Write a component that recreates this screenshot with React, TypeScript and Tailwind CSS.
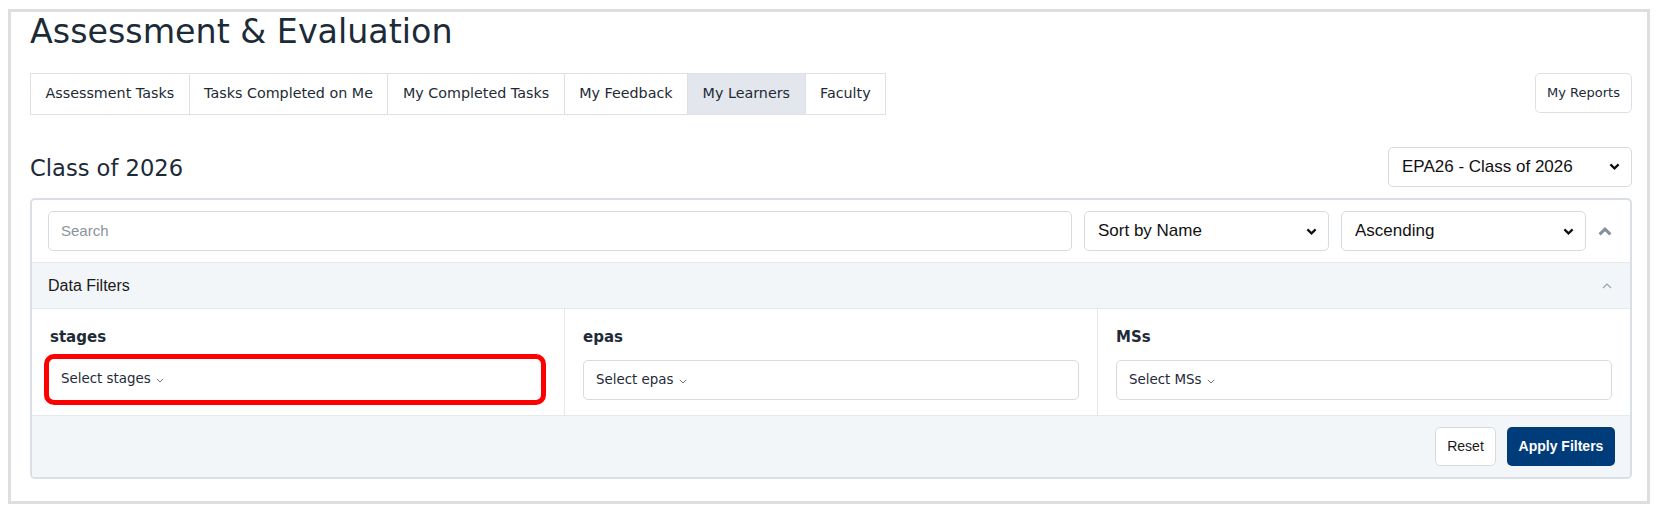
import React from 'react';

const verdana = { fontFamily: '"DejaVu Sans", Verdana, sans-serif' };
const arial = { fontFamily: '"Liberation Sans", Arial, sans-serif' };

const tabs = ['Assessment Tasks', 'Tasks Completed on Me', 'My Completed Tasks', 'My Feedback', 'My Learners', 'Faculty'];

function ChevronDown() {
  return (
    <svg width="11" height="7" viewBox="0 0 11 7" fill="none">
      <path d="M1.4 1.4 L5.5 5.4 L9.6 1.4" stroke="#111" strokeWidth="2.2" />
    </svg>
  );
}

function SmallCaret() {
  return (
    <svg width="8" height="5" viewBox="0 0 8 5" fill="none" className="ml-[5px] mt-[2px]">
      <path d="M0.8 0.8 L4 4 L7.2 0.8" stroke="#6b7580" strokeWidth="1" />
    </svg>
  );
}

function FakeSelect({ label, className }: { label: string; className: string }) {
  return (
    <div
      className={`flex h-[40px] items-center justify-between rounded-[5px] border border-[#d5dbe1] bg-white pl-[13px] pr-[11px] text-[17px] text-[#111] ${className}`}
      style={arial}
    >
      <span>{label}</span>
      <ChevronDown />
    </div>
  );
}

function FilterColumn({ label, placeholder, highlighted, first }: { label: string; placeholder: string; highlighted?: boolean; first?: boolean }) {
  return (
    <div className={`flex-1 px-[18px] pt-[17px] ${first ? '' : 'border-l border-[#e5e9ed]'}`}>
      <div className="h-[22px] text-[15px] font-bold leading-[22px] text-[#1e2b37]" style={verdana}>{label}</div>
      <div className="mt-[12px]">
        {highlighted ? (
          <div className="-mb-[5px] -ml-[6px] -mt-[6px] flex h-[51px] items-center rounded-[10px] border-[5px] border-[#ff0000] bg-white pl-[12px] text-[13.4px] text-[#1e2b37]" style={verdana}>
            Select stages<SmallCaret />
          </div>
        ) : (
          <div className="flex h-[40px] items-center rounded-[5px] border border-[#d5dbe1] bg-white pl-[12px] text-[13.4px] text-[#1e2b37]" style={verdana}>
            {placeholder}<SmallCaret />
          </div>
        )}
      </div>
    </div>
  );
}

export default function App() {
  return (
    <div className="min-h-[512px] bg-white pl-[8px] pt-[9px]">
      <div className="box-border h-[495px] w-[1642px] border-[3px] border-[#dedede] pl-[19px] pr-[15px]">
        <h1 className="h-[40px] text-[33.3px] font-normal leading-[40px] text-[#1c2b38]" style={verdana}>
          Assessment &amp; Evaluation
        </h1>

        <div className="mt-[21px] flex items-start justify-between">
          <div className="flex h-[42px] border border-[#dde1e6]" style={verdana}>
            {tabs.map((t, i) => (
              <div
                key={t}
                className={`flex items-center px-[14.5px] text-[14.3px] text-[#1d2a36] ${i > 0 ? 'border-l border-[#dde1e6]' : ''} ${t === 'My Learners' ? 'bg-[#e3e7ed]' : 'bg-white'}`}
              >
                {t}
              </div>
            ))}
          </div>
          <button className="flex h-[40px] w-[97px] items-center justify-center rounded-[5px] border border-[#dde1e6] bg-white text-[13px] text-[#1d2a36]" style={verdana}>
            My Reports
          </button>
        </div>

        <div className="mt-[32px] flex h-[39px] items-center justify-between">
          <div className="pt-[4px] text-[22.6px] text-[#1c2b38]" style={verdana}>Class of 2026</div>
          <FakeSelect label="EPA26 - Class of 2026" className="h-[39px] w-[244px]" />
        </div>

        <div className="mt-[12px] overflow-hidden rounded-[5px] border-2 border-[#d9dfe5]">
          <div className="flex items-center py-[11px] pl-[16px] pr-[6px]">
            <div className="flex h-[40px] flex-1 items-center rounded-[5px] border border-[#d5dbe1] pl-[12px] text-[15px] text-[#8b949c]" style={arial}>
              Search
            </div>
            <FakeSelect label="Sort by Name" className="ml-[12px] w-[245px]" />
            <FakeSelect label="Ascending" className="ml-[12px] w-[245px]" />
            <div className="flex w-[38px] justify-center">
              <svg width="14" height="9" viewBox="0 0 14 9" fill="none">
                <path d="M1.6 7.4 L7 2.2 L12.4 7.4" stroke="#83909c" strokeWidth="3" />
              </svg>
            </div>
          </div>

          <div className="flex h-[46px] items-center justify-between border-t border-[#e5e9ed] bg-[#f3f6f9] pl-[16px] pr-[18px]">
            <span className="text-[16px] text-[#1a1a1a]" style={arial}>Data Filters</span>
            <svg width="10" height="6" viewBox="0 0 10 6" fill="none">
              <path d="M1 5 L5 1 L9 5" stroke="#9aa4ae" strokeWidth="1.2" />
            </svg>
          </div>

          <div className="flex h-[108px] border-y border-[#e5e9ed] bg-white">
            <FilterColumn label="stages" placeholder="Select stages" highlighted first />
            <FilterColumn label="epas" placeholder="Select epas" />
            <FilterColumn label="MSs" placeholder="Select MSs" />
          </div>

          <div className="flex h-[61px] items-center justify-end gap-[11px] bg-[#f3f6f9] pr-[15px]">
            <button className="h-[39px] w-[61px] rounded-[5px] border border-[#d5dbe1] bg-white text-[14px] text-[#1a1a1a]" style={arial}>
              Reset
            </button>
            <button className="h-[39px] w-[108px] rounded-[5px] bg-[#003b7a] text-[14px] font-bold text-white" style={arial}>
              Apply Filters
            </button>
          </div>
        </div>
      </div>
    </div>
  );
}
